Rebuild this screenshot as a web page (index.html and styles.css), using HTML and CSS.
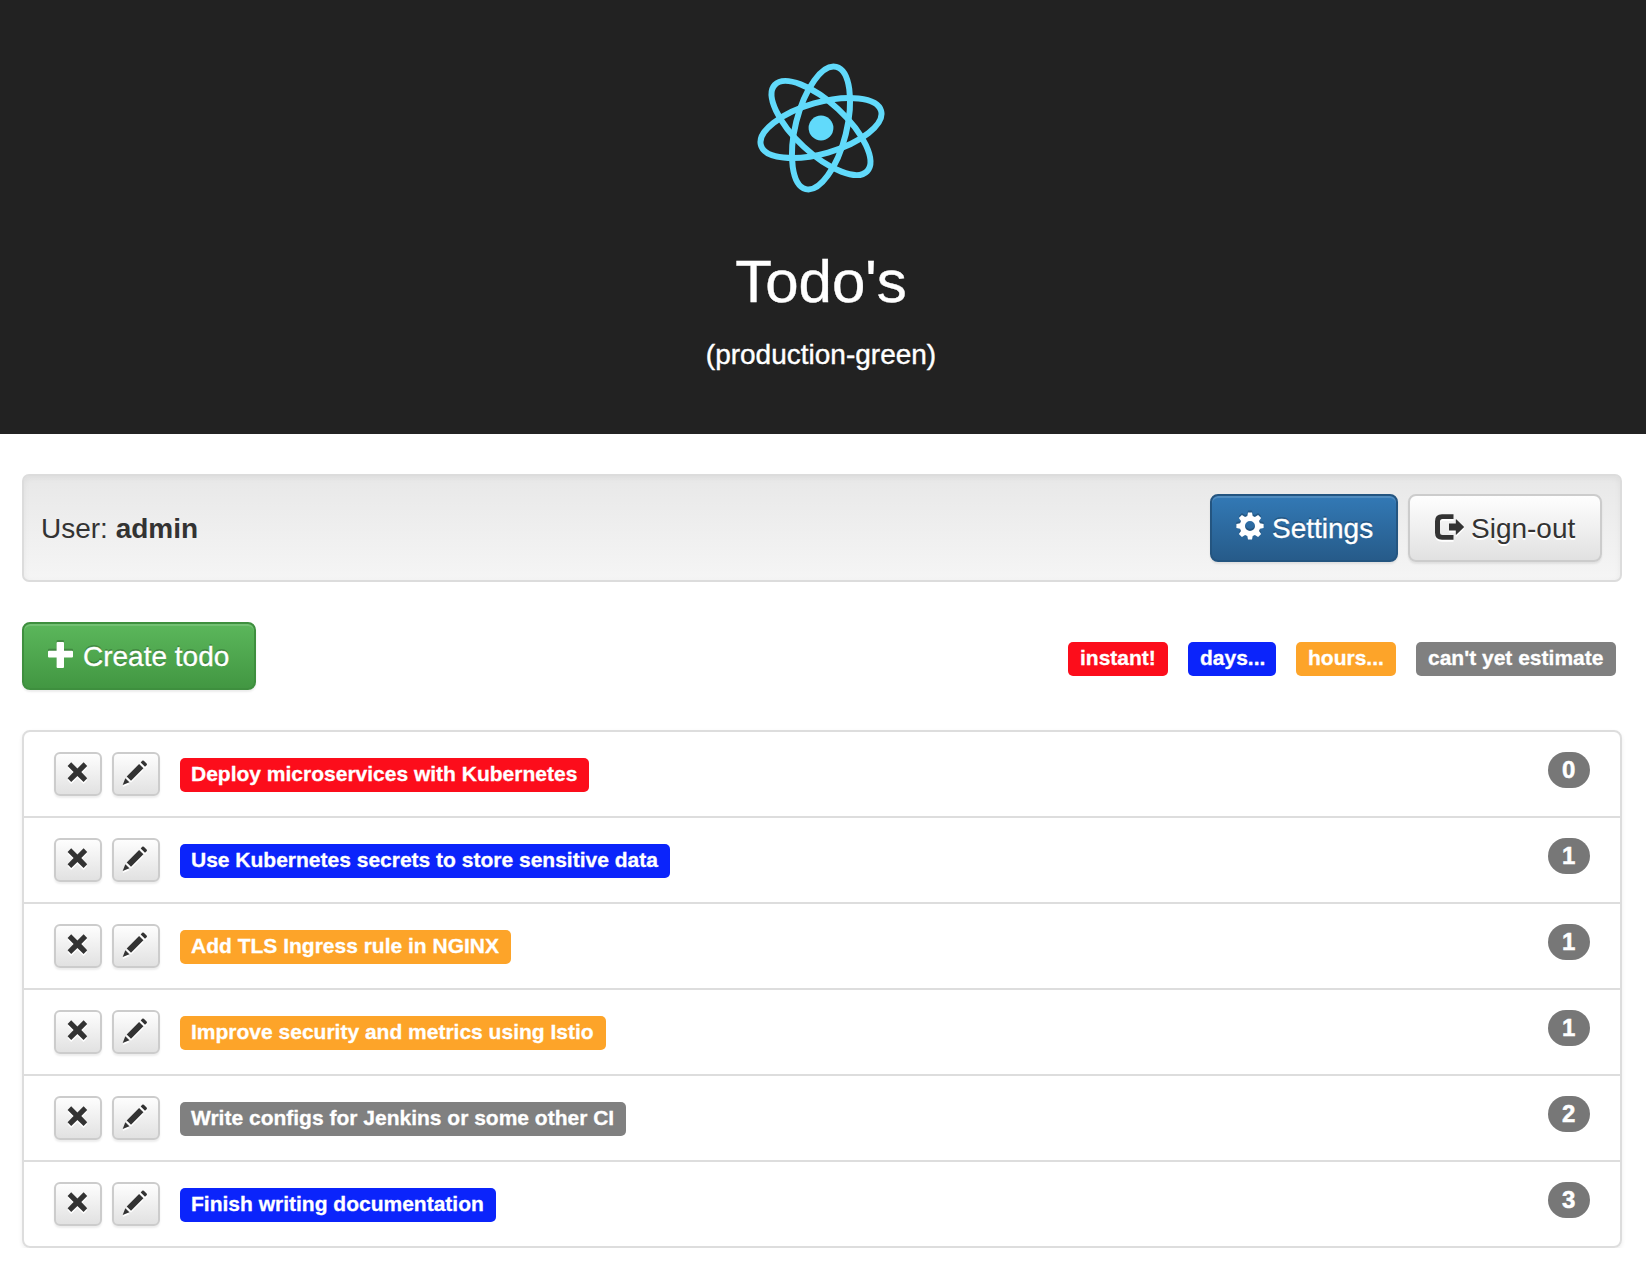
FILE: index.html
```html
<!DOCTYPE html>
<html lang="en">
<head>
<meta charset="utf-8">
<title>Todo's</title>
<link rel="stylesheet" href="styles.css">
</head>
<body>
<svg class="sprite" aria-hidden="true">
  <symbol id="remove" viewBox="0 0 24 24"><path d="M5.2 2.3 11.4 8.5 17.6 2.3 21.2 5.9 15.3 12.1 21.2 18.3 17.6 21.9 11.4 15.9 5.2 21.9 1.6 18.3 7.6 12.1 1.6 5.9Z"/></symbol>
  <symbol id="pencil" viewBox="0 0 26 26"><path d="M18.7 2.4 20.2 .8Q21 .1 21.8.8L24.6 3.6Q25.3 4.4 24.6 5.2L23 6.8ZM17.1 4 21.4 8.3 9 20.7 4.7 16.4ZM3.3 18.2 7.4 22.3.7 24.9Z"/></symbol>
  <symbol id="plus" viewBox="0 0 28 28"><path d="M9.6 2H15Q16 2 16 3V10.8H24Q25 10.8 25 11.8V16.6Q25 17.6 24 17.6H16V27Q16 28 15 28H9.6Q8.6 28 8.6 27V17.6H1Q0 17.6 0 16.6V11.8Q0 10.8 1 10.8H8.6V3Q8.6 2 9.6 2Z"/></symbol>
  <symbol id="cog" viewBox="-14 -14 28 28"><path fill-rule="evenodd" d="M-2-13.6H2L2.7-9.9 4.9-9 8.1-11.1 11.1-8.1 9-4.9 9.9-2.7 13.6-2V2L9.9 2.7 9 4.9 11.1 8.1 8.1 11.1 4.9 9 2.7 9.9 2 13.6H-2L-2.7 9.9-4.9 9-8.1 11.1-11.1 8.1-9 4.9-9.9 2.7-13.6 2V-2L-9.9-2.7-9-4.9-11.1-8.1-8.1-11.1-4.9-9-2.7-9.9ZM0-5A5 5 0 1 0 0 5 5 5 0 1 0 0-5Z"/></symbol>
  <symbol id="signout" viewBox="0 0 30 28"><path d="M19.5 2.2V7H8.5Q6 7 6 9.5V20.5Q6 23 8.5 23H19.5V27.8H8Q1 27.8 1 20.8V9.2Q1 2.2 8 2.2ZM15 11.6H21.8V7.6Q21.8 6.8 22.5 7.4L29.7 14.5Q30.2 15 29.7 15.5L22.5 22.6Q21.8 23.2 21.8 22.4V18.4H15Z"/></symbol>
</svg>

<header class="header">
  <svg class="logo" viewBox="-80 -80 160 160" aria-hidden="true">
    <circle r="12.4" fill="#61dafb"/>
    <g fill="none" stroke="#61dafb" stroke-width="6">
      <ellipse rx="62.5" ry="25.5" transform="rotate(-16)"/>
      <ellipse rx="63" ry="25.5" transform="rotate(-76)"/>
      <ellipse rx="63.2" ry="25.5" transform="rotate(43)"/>
    </g>
  </svg>
  <h2 class="title">Todo's</h2>
  <p class="subtitle">(production-green)</p>
</header>

<main class="content">
  <section class="well">
    <div class="user">User: <strong>admin</strong></div>
    <div class="actions">
      <button class="btn btn-primary"><svg class="icon"><use href="#cog"/></svg><span>Settings</span></button>
      <button class="btn btn-default"><svg class="icon icon-signout"><use href="#signout"/></svg><span>Sign-out</span></button>
    </div>
  </section>

  <section class="toolbar">
    <button class="btn btn-success"><svg class="icon"><use href="#plus"/></svg><span>Create todo</span></button>
    <div class="legend">
      <span class="label red">instant!</span>
      <span class="label blue">days...</span>
      <span class="label orange">hours...</span>
      <span class="label gray">can't yet estimate</span>
    </div>
  </section>

  <ul class="list">
    <li class="item">
      <button class="btn-xs" aria-label="Delete"><svg class="icon-x"><use href="#remove"/></svg></button>
      <button class="btn-xs" aria-label="Edit"><svg class="icon-pencil"><use href="#pencil"/></svg></button>
      <span class="label red">Deploy microservices with Kubernetes</span><span class="badge">0</span>
    </li>
    <li class="item">
      <button class="btn-xs" aria-label="Delete"><svg class="icon-x"><use href="#remove"/></svg></button>
      <button class="btn-xs" aria-label="Edit"><svg class="icon-pencil"><use href="#pencil"/></svg></button>
      <span class="label blue">Use Kubernetes secrets to store sensitive data</span><span class="badge">1</span>
    </li>
    <li class="item">
      <button class="btn-xs" aria-label="Delete"><svg class="icon-x"><use href="#remove"/></svg></button>
      <button class="btn-xs" aria-label="Edit"><svg class="icon-pencil"><use href="#pencil"/></svg></button>
      <span class="label orange">Add TLS Ingress rule in NGINX</span><span class="badge">1</span>
    </li>
    <li class="item">
      <button class="btn-xs" aria-label="Delete"><svg class="icon-x"><use href="#remove"/></svg></button>
      <button class="btn-xs" aria-label="Edit"><svg class="icon-pencil"><use href="#pencil"/></svg></button>
      <span class="label orange">Improve security and metrics using Istio</span><span class="badge">1</span>
    </li>
    <li class="item">
      <button class="btn-xs" aria-label="Delete"><svg class="icon-x"><use href="#remove"/></svg></button>
      <button class="btn-xs" aria-label="Edit"><svg class="icon-pencil"><use href="#pencil"/></svg></button>
      <span class="label gray">Write configs for Jenkins or some other CI</span><span class="badge">2</span>
    </li>
    <li class="item">
      <button class="btn-xs" aria-label="Delete"><svg class="icon-x"><use href="#remove"/></svg></button>
      <button class="btn-xs" aria-label="Edit"><svg class="icon-pencil"><use href="#pencil"/></svg></button>
      <span class="label blue">Finish writing documentation</span><span class="badge">3</span>
    </li>
  </ul>
</main>
</body>
</html>
```
FILE: styles.css
```css
* { box-sizing: border-box; }
body {
  margin: 0;
  background: #fff;
  color: #333;
  font: 28px/40px "Liberation Sans", Arial, sans-serif;
}
.sprite { display: none; }
svg { fill: currentColor; overflow: visible; flex: none; }

.header {
  display: flex;
  flex-direction: column;
  align-items: center;
  height: 434px;
  padding: 48px 4px 0 0;
  background: #222;
  color: #fff;
  -webkit-text-stroke: .4px currentColor;
}
.logo { width: 160px; height: 160px; }
.title { margin: 41px 0 0; font-size: 60px; line-height: 66px; font-weight: 400; }
.subtitle { margin: 20px 0 0; }

.content { padding: 40px 24px 0 22px; }

.well {
  display: flex;
  justify-content: space-between;
  align-items: center;
  height: 108px;
  padding: 0 18px 0 17px;
  border: 2px solid #dcdcdc;
  border-radius: 7px;
  background: linear-gradient(#e8e8e8, #f5f5f5);
  box-shadow: inset 0 2px 6px rgba(0, 0, 0, .05), 0 2px 0 rgba(255, 255, 255, .1);
}
.actions { display: flex; gap: 10px; }
.user { padding-top: 1px; }

.btn, .btn-xs { font: inherit; display: flex; margin: 0; }
.btn {
  align-items: flex-start;
  gap: 8px;
  height: 68px;
  padding: 12px 24px;
  border: 2px solid;
  border-radius: 8px;
  white-space: nowrap;
}
.btn span { margin-top: 1px; }
.icon { width: 28px; height: 28px; margin-top: 4px; }
.icon-signout { width: 30px; margin-right: -1px; }
.btn-primary, .btn-success {
  color: #fff;
  text-shadow: 0 -2px 0 rgba(0, 0, 0, .2);
  -webkit-text-stroke: .3px currentColor;
  box-shadow: inset 0 2px 0 rgba(255, 255, 255, .15), 0 2px 2px rgba(0, 0, 0, .075);
}
.btn-primary { width: 188px; border-color: #245580; background: linear-gradient(#337ab7, #265a88) border-box; }
.btn-success { width: 234px; gap: 7px; border-color: #3e8f3e; background: linear-gradient(#5cb85c, #419641) border-box; }
.btn-default { width: 194px; }
.btn-default, .btn-xs {
  color: #333;
  border: 2px solid #ccc;
  background: linear-gradient(#fff, #e0e0e0) border-box;
  text-shadow: 0 2px 0 #fff;
  box-shadow: inset 0 2px 0 rgba(255, 255, 255, .15), 0 2px 2px rgba(0, 0, 0, .075);
}
.btn-primary .icon, .btn-success .icon { filter: drop-shadow(0 -2px 0 rgba(0, 0, 0, .2)); }
.btn-default .icon, .btn-xs svg { filter: drop-shadow(0 2px 0 #fff); }

.toolbar { display: flex; justify-content: space-between; margin-top: 40px; }
.legend {
  display: grid;
  grid-template-columns: 100px 88px 100px 200px;
  column-gap: 20px;
  margin: 20px 6px 0 0;
}

.label {
  height: 34px;
  padding: 4px 12px 6px 11px;
  border-radius: 5px;
  color: #fff;
  font-size: 21px;
  line-height: 24px;
  font-weight: 700;
  white-space: nowrap;
  -webkit-text-stroke: .3px currentColor;
}
.legend .label { padding-left: 12px; padding-right: 0; }
.red { background: #fc0d1b; }
.blue { background: #0b24fb; }
.orange { background: #fda429; }
.gray { background: #808080; }

.list {
  list-style: none;
  margin: 40px 0 0;
  padding: 0;
  border: 2px solid #ddd;
  border-radius: 8px;
  box-shadow: 0 2px 4px rgba(0, 0, 0, .075);
}
.item {
  display: flex;
  align-items: flex-start;
  gap: 10px;
  height: 86px;
  padding: 20px 30px;
  border-bottom: 2px solid #ddd;
}
.item:last-child { height: 84px; border-bottom: 0; }
.item .label { margin: 6px 0 0 10px; }
.btn-xs { width: 48px; height: 44px; padding: 6px 10px; border-radius: 6px; }
.icon-x { width: 24px; height: 24px; }
.icon-pencil { width: 26px; height: 26px; margin: 0 0 0 -2px; }
.badge {
  margin-left: auto;
  min-width: 42px;
  height: 36px;
  padding: 6px 14px;
  border-radius: 20px;
  background: #777;
  color: #fff;
  font-size: 24px;
  line-height: 24px;
  font-weight: 700;
  -webkit-text-stroke: .5px currentColor;
}
```
